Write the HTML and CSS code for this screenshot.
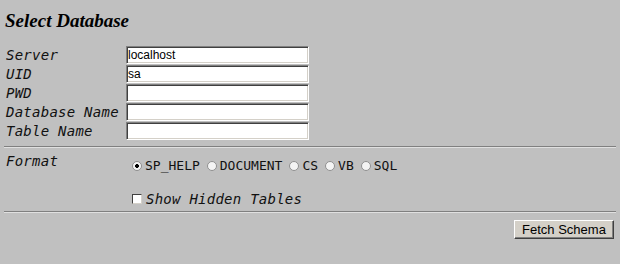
FILE: index.html
```html
<!DOCTYPE html>
<html lang="en">
<head>
  <meta charset="UTF-8">
  <title>Select Database</title>
  <link rel="stylesheet" href="styles.css">
</head>
<body>
  <h1>Select Database</h1>

  <div class="fields">
    <label for="server">Server</label>
    <input type="text" id="server" value="localhost">
    <label for="uid">UID</label>
    <input type="text" id="uid" value="sa">
    <label for="pwd">PWD</label>
    <input type="password" id="pwd">
    <label for="dbname">Database Name</label>
    <input type="text" id="dbname">
    <label for="tblname">Table Name</label>
    <input type="text" id="tblname">
  </div>

  <hr class="sep-top">

  <div class="format">
    <span class="label">Format</span>
    <div class="options">
      <div class="radios">
        <label><input type="radio" name="fmt" checked>SP_HELP</label>
        <label><input type="radio" name="fmt">DOCUMENT</label>
        <label><input type="radio" name="fmt">CS</label>
        <label><input type="radio" name="fmt">VB</label>
        <label><input type="radio" name="fmt">SQL</label>
      </div>
      <label class="hidden-opt"><input type="checkbox">Show Hidden Tables</label>
    </div>
  </div>

  <hr class="sep-bottom">

  <div class="actions">
    <button>Fetch Schema</button>
  </div>
</body>
</html>
```

FILE: styles.css
```css
body {
  margin: 0;
  padding: 4px;
  background: #c0c0c0;
  font-family: "DejaVu Sans Mono", monospace;
  color: #000;
}

h1 {
  font-family: "Liberation Serif", serif;
  font-style: italic;
  font-weight: bold;
  font-size: 19px;
  margin: 6px 0 0 1px;
  line-height: 22px;
}

.fields {
  display: grid;
  grid-template-columns: 120px 183px;
  row-gap: 1px;
  margin: 14px 0 0 2px;
}

.fields label,
.format .label,
.hidden-opt {
  font-style: italic;
  font-size: 14px;
  line-height: 18px;
  letter-spacing: 0.25px;
  color: #111;
}

.fields input {
  height: 18px;
  box-sizing: border-box;
  padding: 0 1px;
  font-family: "Liberation Sans", sans-serif;
  font-size: 12px;
  color: #000;
  background: #fff;
  border: 1px solid;
  border-color: #808080 #fff #fff #808080;
  box-shadow: inset 1px 1px #404040, inset -1px -1px #d4d0c8;
  outline: none;
}

hr {
  border: 0;
  border-top: 1px solid #808080;
  border-bottom: 1px solid #e0e0e0;
  margin: 0;
}

.sep-top {
  margin-top: 6px;
}

.sep-bottom {
  margin-top: 3px;
}

.format {
  display: grid;
  grid-template-columns: 126px auto;
  margin: 4px 0 0 2px;
}

.radios {
  display: flex;
  gap: 7px;
  margin: 5px 0 0 0;
  font-size: 13px;
  line-height: 18px;
  color: #111;
}

.radios label {
  display: flex;
  align-items: center;
}

.radios input {
  appearance: none;
  width: 10px;
  height: 10px;
  margin: 0 3px 0 0;
  border-radius: 50%;
  border: 1px solid #909090;
  background: #f4f4f4;
  box-sizing: border-box;
}

.radios input:checked {
  background: radial-gradient(circle, #000 0 1.6px, #f4f4f4 2.2px);
}

.hidden-opt {
  display: flex;
  align-items: center;
  margin: 15px 0 0 0;
}

.hidden-opt input {
  appearance: none;
  width: 10px;
  height: 10px;
  margin: 0 4px 0 0;
  background: #fff;
  border: 1px solid;
  border-color: #404040 #d4d0c8 #d4d0c8 #404040;
  box-sizing: border-box;
}

.actions {
  display: flex;
  justify-content: flex-end;
  padding: 7px 2px 0 0;
}

button {
  width: 100px;
  height: 19px;
  box-sizing: border-box;
  font-family: "Liberation Sans", sans-serif;
  font-size: 13px;
  color: #000;
  background: #d4d0c8;
  border: 1px solid;
  border-color: #fff #404040 #404040 #fff;
  box-shadow: inset -1px -1px #808080;
  padding: 0;
}
```
